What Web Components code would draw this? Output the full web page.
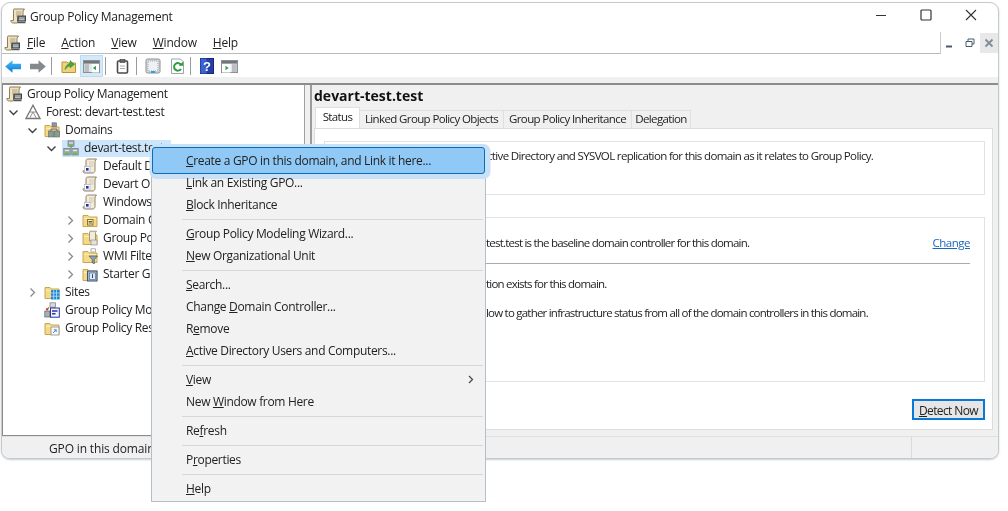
<!DOCTYPE html>
<html lang="en">
<head>
<meta charset="utf-8">
<title>Group Policy Management</title>
<style>
  html, body { margin: 0; background: #fff; }
  body { position: relative; width: 1008px; height: 511px; overflow: hidden; font: 12px "Open Sans", "Noto Sans", sans-serif; color: #222; }
</style>
</head>
<body>
<gpm-window>
  <gpm-titlebar slot="title">Group Policy Management</gpm-titlebar>
  <gpm-menubar slot="menu"></gpm-menubar>
  <gpm-toolbar slot="tools"></gpm-toolbar>
  <gpm-tree slot="tree">
    <gpm-node level="0" icon="app">Group Policy Management</gpm-node>
    <gpm-node level="1" icon="forest" toggle="open">Forest: devart-test.test</gpm-node>
    <gpm-node level="2" icon="domains" toggle="open">Domains</gpm-node>
    <gpm-node level="3" icon="domain" toggle="open" selected>devart-test.test</gpm-node>
    <gpm-node level="4" icon="gpo">Default D</gpm-node>
    <gpm-node level="4" icon="gpo">Devart OU</gpm-node>
    <gpm-node level="4" icon="gpo">Windows</gpm-node>
    <gpm-node level="4" icon="ou" toggle="closed">Domain C</gpm-node>
    <gpm-node level="4" icon="gpofolder" toggle="closed">Group Po</gpm-node>
    <gpm-node level="4" icon="wmi" toggle="closed">WMI Filte</gpm-node>
    <gpm-node level="4" icon="starter" toggle="closed">Starter GP</gpm-node>
    <gpm-node level="2" icon="sites" toggle="closed">Sites</gpm-node>
    <gpm-node level="2" icon="modeling">Group Policy Mo</gpm-node>
    <gpm-node level="2" icon="results">Group Policy Res</gpm-node>
  </gpm-tree>
  <gpm-detail slot="detail" heading="devart-test.test">
    <gpm-box style="height:54px;padding-top:5px">
      <gpm-line x="162" style="letter-spacing:-.65px">ctive Directory and SYSVOL replication for this domain as it relates to Group Policy.</gpm-line>
    </gpm-box>
    <gpm-box style="height:165px;padding-top:16px;margin-top:22px">
      <gpm-line x="161">test.test is the baseline domain controller for this domain.<a slot="end" href="#">Change</a></gpm-line>
      <hr>
      <gpm-line x="161">tion exists for this domain.</gpm-line>
      <gpm-line x="161" style="margin-top:11px">low to gather infrastructure status from all of the domain controllers in this domain.</gpm-line>
    </gpm-box>
    <gpm-button><u>D</u>etect Now</gpm-button>
  </gpm-detail>
  <gpm-statusbar slot="status">GPO in this domain</gpm-statusbar>
</gpm-window>
<gpm-context-menu>
  <gpm-item active><u>C</u>reate a GPO in this domain, and Link it here...</gpm-item>
  <gpm-item><u>L</u>ink an Existing GPO...</gpm-item>
  <gpm-item><u>B</u>lock Inheritance</gpm-item>
  <gpm-sep></gpm-sep>
  <gpm-item><u>G</u>roup Policy Modeling Wizard...</gpm-item>
  <gpm-item><u>N</u>ew Organizational Unit</gpm-item>
  <gpm-sep></gpm-sep>
  <gpm-item><u>S</u>earch...</gpm-item>
  <gpm-item>Change <u>D</u>omain Controller...</gpm-item>
  <gpm-item>R<u>e</u>move</gpm-item>
  <gpm-item><u>A</u>ctive Directory Users and Computers...</gpm-item>
  <gpm-sep></gpm-sep>
  <gpm-item submenu><u>V</u>iew</gpm-item>
  <gpm-item>New <u>W</u>indow from Here</gpm-item>
  <gpm-sep></gpm-sep>
  <gpm-item>Re<u>f</u>resh</gpm-item>
  <gpm-sep></gpm-sep>
  <gpm-item>P<u>r</u>operties</gpm-item>
  <gpm-sep></gpm-sep>
  <gpm-item><u>H</u>elp</gpm-item>
</gpm-context-menu>

<script>
const folder = '<path d="M1 3.5h5l1.5 1.5H15v9.5H1z" fill="#f5d985" stroke="#c8a652"/><path d="M2 6.5h12" stroke="#fbecb8"/>';
const scroll = '<path d="M5.5 1h9l-1.5 2v9.5c0 1.2-.8 2.5-2 2.5H2.8C1.6 15 1 14 1 12.8h3V3c0-1 .6-2 1.5-2z" fill="#f3ecd9" stroke="#8f8468"/>';
const ICONS = {
  app: '<path d="M4 1h10.5L13 3v6H7.5v6H3.2C1.8 15 .8 14 .8 12.6h2.7V3c0-1 0-2 .5-2z" fill="#efe2c2" stroke="#8d7c58"/><path d="M6 4h5.5M6 6h5.5M6 8h2" stroke="#b3a27c"/><rect x="8" y="8" width="7.5" height="5" fill="#6b747c" stroke="#444"/><path d="M9 10h5.5M9 11.7h5.5" stroke="#c8ced3"/><path d="M8 14.5h7.5" stroke="#555" stroke-width="1.5"/>',
  forest: '<path d="M8 1.2l7 13.3H1z" fill="#fff" stroke="#757575" stroke-width="1.3"/><path d="M4.5 8h7M8 8l-3.4 6.3M8 8l3.4 6.3" stroke="#8f8f8f" fill="none"/>',
  domains: folder + '<rect x="8" y=".8" width="4.5" height="4" fill="#8f979d" stroke="#5d666c" stroke-width=".6"/><rect x="4.5" y="9" width="5" height="6" fill="#8f979d" stroke="#5d666c" stroke-width=".6"/><rect x="10.5" y="9" width="5" height="6" fill="#8f979d" stroke="#5d666c" stroke-width=".6"/><path d="M7 9V7h6v2" fill="none" stroke="#5d666c"/><path d="M5.5 13.6h3M11.5 13.6h3" stroke="#5fbf4a" stroke-width="1.4"/>',
  domain: '<rect x="5" y=".8" width="6" height="5.4" fill="#a9b0b5" stroke="#6c757b" stroke-width=".7"/><rect x=".8" y="8.5" width="6.4" height="6.5" fill="#a9b0b5" stroke="#6c757b" stroke-width=".7"/><rect x="8.8" y="8.5" width="6.4" height="6.5" fill="#a9b0b5" stroke="#6c757b" stroke-width=".7"/><path d="M6 3h4M2 10.5h4M10 10.5h4" stroke="#e5e8ea"/><path d="M6 5h4M2 13.4h4M10 13.4h4" stroke="#58c23c" stroke-width="1.6"/><path d="M8 6v2.5" stroke="#6c757b"/>',
  gpo: scroll + '<path d="M7 4h4.5M7 6h4.5M7 8h4.5" stroke="#cfc7b0"/><rect x="2.5" y="8.5" width="5.5" height="5.5" fill="#fff" stroke="#a8a8b8" stroke-width=".6"/><rect x="4" y="10" width="2.6" height="2.6" fill="#1f2fa0"/>',
  ou: folder + '<rect x="5.5" y="7.5" width="5.5" height="5.5" fill="#fff3c4" stroke="#8a7430"/><path d="M6.5 9.5h3.5M6.5 11h3.5" stroke="#6a5820"/>',
  gpofolder: folder + '<path d="M8 1.2h6.5l-1 1.2v8.6H7.5V3z" fill="#f3ecd9" stroke="#8f8468" stroke-width=".8"/><rect x="9" y="10" width="6" height="5" fill="#e6e2d6" stroke="#8f8f8f" stroke-width=".7"/>',
  wmi: folder + '<path d="M7 8h8.5l-3.2 3.5v4.2l-2.1-1v-3.2z" fill="#8ea2b2" stroke="#51606c" stroke-width=".8"/><rect x="9" y=".8" width="4.5" height="3.2" fill="#fff" stroke="#8f8f8f" stroke-width=".7"/>',
  starter: folder + '<rect x="5.5" y="5" width="9.5" height="10" fill="#9fb8d8" stroke="#3d5578"/><rect x="7.5" y="7" width="6" height="6.5" fill="#dfe9f5" stroke="#5d7391" stroke-width=".7"/><path d="M10.5 8.2v3.8" stroke="#22478a"/>',
  sites: folder + '<rect x="7" y="6" width="8.6" height="9.5" fill="#1e88d8"/><path d="M9.7 6v9.5M12.5 6v9.5M7 9h8.6M7 12.2h8.6" stroke="#bfe1f8" stroke-width=".8"/>',
  modeling: '<rect x="6" y=".8" width="5.5" height="4.4" fill="#d5d9dd" stroke="#727a80" stroke-width=".7"/><rect x=".8" y="9" width="5" height="6" fill="#a9b0b5" stroke="#5c6469" stroke-width=".7"/><path d="M5 5l-2 4M10 5l2 4" stroke="#c98b2f" stroke-width="1.2"/><rect x="6.5" y="6" width="8.8" height="9.2" fill="#f4f4f8" stroke="#2433a8"/><path d="M8 9h5.5M8 11.8h3.5" stroke="#2433a8" stroke-width="1.6"/><path d="M2 7.5l2-1" stroke="#c8303a" stroke-width="1.5"/>',
  results: folder + '<rect x="7" y="7" width="8" height="8" fill="#f7f7f7" stroke="#8c8c8c" stroke-width=".8"/><path d="M9 13l3.2-3.2m0 0H10m2.2 0V12" fill="none" stroke="#3e8fd0"/>',
  back: '<defs><linearGradient id="b" x1="0" y1="0" x2="0" y2="1"><stop offset="0" stop-color="#4fc0f5"/><stop offset="1" stop-color="#0a78d6"/></linearGradient></defs><path d="M.2 6.5L7.5.3v3.4H16v5.6H7.5v3.4z" fill="url(#b)"/>',
  forward: '<path d="M15.8 6.5L8.5.3v3.4H0v5.6h8.5v3.4z" fill="#85898b"/>',
  up: '<path d="M1 4h5l1 1h7.5v9.5H1z" fill="#eed27c" stroke="#b79536"/><path d="M4 11.5c.5-3.4 2.5-5.5 5-6V2.6l4.4 3.9L9 9.8V7.8c-2 .4-3.5 1.8-5 3.7z" fill="#46a63f" stroke="#2a7b2a" stroke-width=".5"/>',
  pane: '<rect x=".5" y=".5" width="16" height="12" fill="#e5e8ea" stroke="#8b9094"/><rect x="1" y="1" width="15" height="2.6" fill="#70767b"/><rect x="9" y="4" width="7" height="8.5" fill="#fff"/><rect x="1.5" y="4.2" width="4.5" height="7.8" fill="#b9bfc3"/><path d="M13 5.8v4.4l-3.2-2.2z" fill="#2ea44f"/>',
  pane2: '<rect x=".5" y=".5" width="16" height="12" fill="#e5e8ea" stroke="#8b9094"/><rect x="1" y="1" width="15" height="2.6" fill="#70767b"/><rect x="1" y="4" width="8.5" height="8.5" fill="#fff"/><rect x="11" y="4.2" width="4.8" height="7.8" fill="#b9bfc3"/><path d="M4.5 5.8v4.4l3.2-2.2z" fill="#2ea44f"/>',
  clip: '<rect x="1.5" y="2" width="10" height="12" rx="1" fill="#fff" stroke="#4a4a4a" stroke-width="1.6"/><rect x="4" y=".5" width="5" height="3" fill="#666" stroke="#3a3a3a" stroke-width=".6"/><path d="M4 7h5M4 9.5h5" stroke="#aaa"/>',
  export: '<rect x="1" y="1" width="14" height="14" rx="1.5" fill="#d6dade" stroke="#8a9095"/><rect x="3" y="3" width="10" height="10" fill="#eef0f2" stroke="#a4aaae" stroke-dasharray="1 1"/><path d="M6 14h4" stroke="#29a3e8" stroke-width="2"/>',
  refresh: '<path d="M1.5 1h9l3 3v11.5h-12z" fill="#fff" stroke="#a0a4a8"/><path d="M11 11a3.8 3.8 0 1 1 .3-3.8" fill="none" stroke="#2ba03c" stroke-width="2"/><path d="M8.8 7.8h4.4V3.6z" fill="#2ba03c"/>',
  help: '<rect x=".5" y=".5" width="13" height="15" fill="#2440a8" stroke="#14287a"/><path d="M.5.5h6v15h-6z" fill="#3c62cf"/><text x="7" y="13" text-anchor="middle" font-family="Liberation Sans" font-weight="bold" font-size="13" fill="#fff">?</text>',
};
const SIZES = { back: [16, 13], forward: [16, 13], pane: [17, 13], pane2: [17, 13], clip: [13, 15], help: [14, 16] };

class GpmIcon extends HTMLElement {
  connectedCallback () {
    const name = this.getAttribute('name');
    const [w, h] = SIZES[name] || [16, 16];
    this.attachShadow({ mode: 'open' });
    this.shadowRoot.innerHTML = `
      <style>:host { display: block; width: ${w}px; height: ${h}px; flex: none; } svg { display: block; }</style>
      <svg width="${w}" height="${h}" viewBox="0 0 ${w} ${h}">${ICONS[name]}</svg>`;
  }
}

class GpmWindow extends HTMLElement {
  constructor () {
    super();
    this.attachShadow({ mode: 'open' });
    this.shadowRoot.innerHTML = `
      <style>
        :host { display: flex; flex-direction: column; box-sizing: border-box; width: 998px; height: 457px; margin: 2px 0 0 1px;
          border: 1px solid #c4cace; border-radius: 9px; overflow: hidden; background: #fff; box-shadow: 0 1px 2px rgba(90,110,125,.35); filter: blur(.35px); }
        .strip { height: 6px; background: #f0f0f0; flex: none; }
        .main { flex: 1; min-height: 0; display: flex; background: #f0f0f0; border-top: 2px solid #8c8c8c; }
      </style>
      <slot name="title"></slot>
      <slot name="menu"></slot>
      <slot name="tools"></slot>
      <div class="strip"></div>
      <div class="main"><slot name="tree"></slot><slot name="detail"></slot></div>
      <slot name="status"></slot>`;
  }
}

class GpmTitlebar extends HTMLElement {
  constructor () {
    super();
    this.attachShadow({ mode: 'open' });
    this.shadowRoot.innerHTML = `
      <style>
        :host { display: flex; align-items: center; box-sizing: border-box; height: 29px; padding: 0 0 3px 8px; letter-spacing: -.25px; flex: none; }
        .title { margin-left: 4px; flex: 1; }
        .ctl { width: 45px; height: 24px; display: flex; align-items: center; justify-content: center; }
        .ctls { display: flex; margin: 0 5px 2px 0; }
      </style>
      <gpm-icon name="app"></gpm-icon>
      <span class="title"><slot></slot></span>
      <div class="ctls">
        <div class="ctl"><svg width="12" height="12"><path d="M1 6.5h10" stroke="#333"/></svg></div>
        <div class="ctl"><svg width="12" height="12"><rect x="1" y="1" width="10" height="10" rx="1" fill="none" stroke="#333" stroke-width="1.2"/></svg></div>
        <div class="ctl"><svg width="12" height="12"><path d="M1 1l10 10M11 1L1 11" stroke="#333" stroke-width="1.1"/></svg></div>
      </div>`;
  }
}

class GpmMenubar extends HTMLElement {
  constructor () {
    super();
    this.attachShadow({ mode: 'open' });
    this.shadowRoot.innerHTML = `
      <style>
        :host { display: flex; height: 22px; flex: none; letter-spacing: -.2px; }
        .bar { flex: 1; display: flex; align-items: center; box-sizing: border-box; border-bottom: 1px solid #b9bdc0; border-right: 1px solid #c8cccf; padding-left: 2px; }
        span { margin: 0 8px 1px; }
        span:first-of-type { margin-left: 7px; }
        .mdi { width: 57px; display: flex; align-items: center; justify-content: space-between; }
        .mdi div { width: 18px; height: 20px; display: flex; align-items: center; justify-content: center; }
        .mdi div:last-child { background: #e8e8e8; }
      </style>
      <div class="bar">
        <gpm-icon name="app"></gpm-icon>
        <span><u>F</u>ile</span><span><u>A</u>ction</span><span><u>V</u>iew</span><span><u>W</u>indow</span><span><u>H</u>elp</span>
      </div>
      <div class="mdi">
        <div><svg width="10" height="10"><path d="M1 8.5h6" stroke="#4a5a6a" stroke-width="2"/></svg></div>
        <div><svg width="10" height="10"><path d="M3 3V1h6v5H7M1 3.5h6v5H1z" fill="none" stroke="#4a5a6a"/></svg></div>
        <div><svg width="10" height="10"><path d="M1.5 1.5l7 7M8.5 1.5l-7 7" stroke="#7d8c9a" stroke-width="1.8"/></svg></div>
      </div>`;
  }
}

class GpmToolbar extends HTMLElement {
  constructor () {
    super();
    this.attachShadow({ mode: 'open' });
    const btn = (n, cls = '', st = '') => `<div class="b ${cls}" style="${st}"><gpm-icon name="${n}"></gpm-icon></div>`;
    const sep = (st = '') => `<i style="${st}"></i>`;
    this.shadowRoot.innerHTML = `
      <style>
        :host { display: flex; align-items: flex-end; height: 23px; padding-left: 1px; flex: none; }
        .b { width: 23px; height: 22px; display: flex; align-items: center; justify-content: center; box-sizing: border-box; }
        .on { background: #d5e9f9; border: 1px solid #bcdcf5; }
        i { display: block; width: 1px; height: 18px; background: #9a9a9a; margin: 0 5px 2px 2px; }
      </style>
      ${btn('back', '', 'padding-right:3px')}${btn('forward')}${sep()}
      ${btn('up')}${btn('pane', 'on')}${sep()}
      ${btn('clip')}${sep('margin-right:4px')}
      ${btn('export')}${btn('refresh', '', 'margin-left:2px')}${sep('margin:0 4px 2px 1px')}
      ${btn('help')}${btn('pane2')}`;
  }
}

class GpmTree extends HTMLElement {
  constructor () {
    super();
    this.attachShadow({ mode: 'open' });
    this.shadowRoot.innerHTML = `
      <style>
        :host { display: block; box-sizing: border-box; width: 303px; height: 100%; background: #fff; border: 1px solid #8c8c8c; border-top: 0; border-right-color: #a0a0a0; letter-spacing: -.33px; }
      </style>
      <slot></slot>`;
  }
}

class GpmNode extends HTMLElement {
  connectedCallback () {
    const level = +this.getAttribute('level');
    const toggle = this.getAttribute('toggle');
    const path = toggle === 'open' ? '<path d="M1.5 3.5l4 4 4-4" fill="none" stroke="#404040" stroke-width="1.4"/>'
      : toggle === 'closed' ? '<path d="M3.5 1.5l4 4-4 4" fill="none" stroke="#8a8a8a" stroke-width="1.3"/>' : '';
    this.attachShadow({ mode: 'open' });
    this.shadowRoot.innerHTML = `
      <style>
        :host { display: flex; align-items: center; height: 18px; padding-left: ${2 + level * 19}px; white-space: nowrap; }
        .t { width: 11px; margin-left: -16px; margin-right: 5px; flex: none; display: flex; }
        .sel { display: flex; align-items: center; height: 17px; padding-right: 7px; }
        :host([selected]) .sel { background: #cde6fb; }
        .label { margin: 0 0 1px 5px; }
        gpm-icon { margin-left: 1px; }
      </style>
      <span class="t"><svg width="11" height="11">${path}</svg></span>
      <span class="sel"><gpm-icon name="${this.getAttribute('icon')}"></gpm-icon><span class="label"><slot></slot></span></span>`;
  }
}

class GpmDetail extends HTMLElement {
  connectedCallback () {
    this.attachShadow({ mode: 'open' });
    this.shadowRoot.innerHTML = `
      <style>
        :host { display: flex; flex-direction: column; flex: 1; min-width: 0; box-sizing: border-box; margin-left: 5px; height: 100%; border-left: 2px solid #9c9c9c; padding: 0 5px 6px 2px; font-size: 11.5px; letter-spacing: -.78px; }
        h1 { margin: 0; height: 22px; line-height: 22px; font-size: 14px; font-weight: 700; color: #111; letter-spacing: 0; }
        .tabs { display: flex; height: 21px; flex: none; padding-left: 1px; letter-spacing: -.62px; }
        .tab { box-sizing: border-box; height: 18px; margin-top: 3px; line-height: 16px; text-align: center; background: #f0f0f0; border: 1px solid #dfdfdf; border-bottom: 0; margin-right: -1px; }
        .tab.on { height: 21px; margin-top: 0; line-height: 18px; background: #fff; z-index: 1; }
        .page { flex: 1; display: flex; flex-direction: column; background: #fff; border: 1px solid #dcdcdc; padding: 12px 7px 0 9px; }
      </style>
      <h1>${this.getAttribute('heading')}</h1>
      <div class="tabs">
        <div class="tab on" style="width:45px">Status</div><div class="tab" style="width:145px">Linked Group Policy Objects</div><div class="tab" style="width:129px">Group Policy Inheritance</div><div class="tab" style="width:60px">Delegation</div>
      </div>
      <div class="page"><slot></slot></div>`;
  }
}

class GpmBox extends HTMLElement {
  constructor () {
    super();
    this.attachShadow({ mode: 'open' });
    this.shadowRoot.innerHTML = `
      <style>
        :host { display: block; box-sizing: border-box; flex: none; border: 1px solid #e2e2e2; padding-right: 14px; }
        ::slotted(hr) { border: 0; height: 1px; background: #aaa; margin: 11px 0; }
      </style>
      <slot></slot>`;
  }
}

class GpmLine extends HTMLElement {
  connectedCallback () {
    this.attachShadow({ mode: 'open' });
    this.shadowRoot.innerHTML = `
      <style>
        :host { display: flex; height: 18px; line-height: 18px; white-space: nowrap; padding-left: ${this.getAttribute('x')}px; }
        .grow { flex: 1; }
        ::slotted(a) { color: #1a68bd; letter-spacing: -.5px; }
      </style>
      <span class="grow"><slot></slot></span><slot name="end"></slot>`;
  }
}

class GpmButton extends HTMLElement {
  constructor () {
    super();
    this.attachShadow({ mode: 'open' });
    this.shadowRoot.innerHTML = `
      <style>
        :host { display: block; box-sizing: border-box; align-self: flex-end; width: 73px; height: 21px; margin-top: 17px; border: 2px solid #0a78d7; background: #e6e6e6; text-align: center; line-height: 19px; font-size: 12px; letter-spacing: -.6px; }
      </style>
      <slot></slot>`;
  }
}

class GpmStatusbar extends HTMLElement {
  constructor () {
    super();
    this.attachShadow({ mode: 'open' });
    this.shadowRoot.innerHTML = `
      <style>
        :host { display: flex; align-items: stretch; box-sizing: border-box; height: 22px; flex: none; background: #f0f0f0; border-top: 1px solid #e0e0e0; padding-left: 47px; letter-spacing: -.15px; white-space: nowrap; }
        span { width: 862px; line-height: 24px; }
        i { width: 1px; background: #dadada; }
      </style>
      <span><slot></slot></span><i></i>`;
  }
}

class GpmContextMenu extends HTMLElement {
  constructor () {
    super();
    this.attachShadow({ mode: 'open' });
    this.shadowRoot.innerHTML = `
      <style>
        :host { position: absolute; left: 151px; top: 147px; box-sizing: border-box; width: 335px; height: 355px; padding: 2px 0 1px; background: #f2f2f2; border: 1px solid #b3c0c8; isolation: isolate; letter-spacing: -.32px; filter: blur(.35px); }
      </style>
      <slot></slot>`;
  }
}

class GpmItem extends HTMLElement {
  constructor () {
    super();
    this.attachShadow({ mode: 'open' });
    this.shadowRoot.innerHTML = `
      <style>
        :host { display: flex; align-items: center; position: relative; height: 22px; padding-left: 34px; white-space: nowrap; }
        :host([active])::before { content: ""; position: absolute; z-index: -1; inset: -3px 0 -2px 0; box-sizing: border-box; background: #90c8f6; border: 1px solid #0b6cb8; border-radius: 3px; box-shadow: 1.5px 1px 0 4px #c8e1f6; }
        span { margin-bottom: 1px; }
        svg { position: absolute; right: 11px; top: 6px; display: none; }
        :host([submenu]) svg { display: block; }
      </style>
      <span><slot></slot></span>
      <svg width="6" height="9"><path d="M1 1l3.5 3.5L1 8" fill="none" stroke="#444" stroke-width="1.2"/></svg>`;
  }
}

class GpmSep extends HTMLElement {
  constructor () {
    super();
    this.attachShadow({ mode: 'open' });
    this.shadowRoot.innerHTML = `
      <style>
        :host { display: block; height: 7px; padding: 3px 2px 0 30px; box-sizing: border-box; }
        div { height: 1px; background: #d7d7d7; }
      </style>
      <div></div>`;
  }
}

customElements.define('gpm-icon', GpmIcon);
customElements.define('gpm-window', GpmWindow);
customElements.define('gpm-titlebar', GpmTitlebar);
customElements.define('gpm-menubar', GpmMenubar);
customElements.define('gpm-toolbar', GpmToolbar);
customElements.define('gpm-tree', GpmTree);
customElements.define('gpm-node', GpmNode);
customElements.define('gpm-detail', GpmDetail);
customElements.define('gpm-box', GpmBox);
customElements.define('gpm-line', GpmLine);
customElements.define('gpm-button', GpmButton);
customElements.define('gpm-statusbar', GpmStatusbar);
customElements.define('gpm-context-menu', GpmContextMenu);
customElements.define('gpm-item', GpmItem);
customElements.define('gpm-sep', GpmSep);
</script>
</body>
</html>
